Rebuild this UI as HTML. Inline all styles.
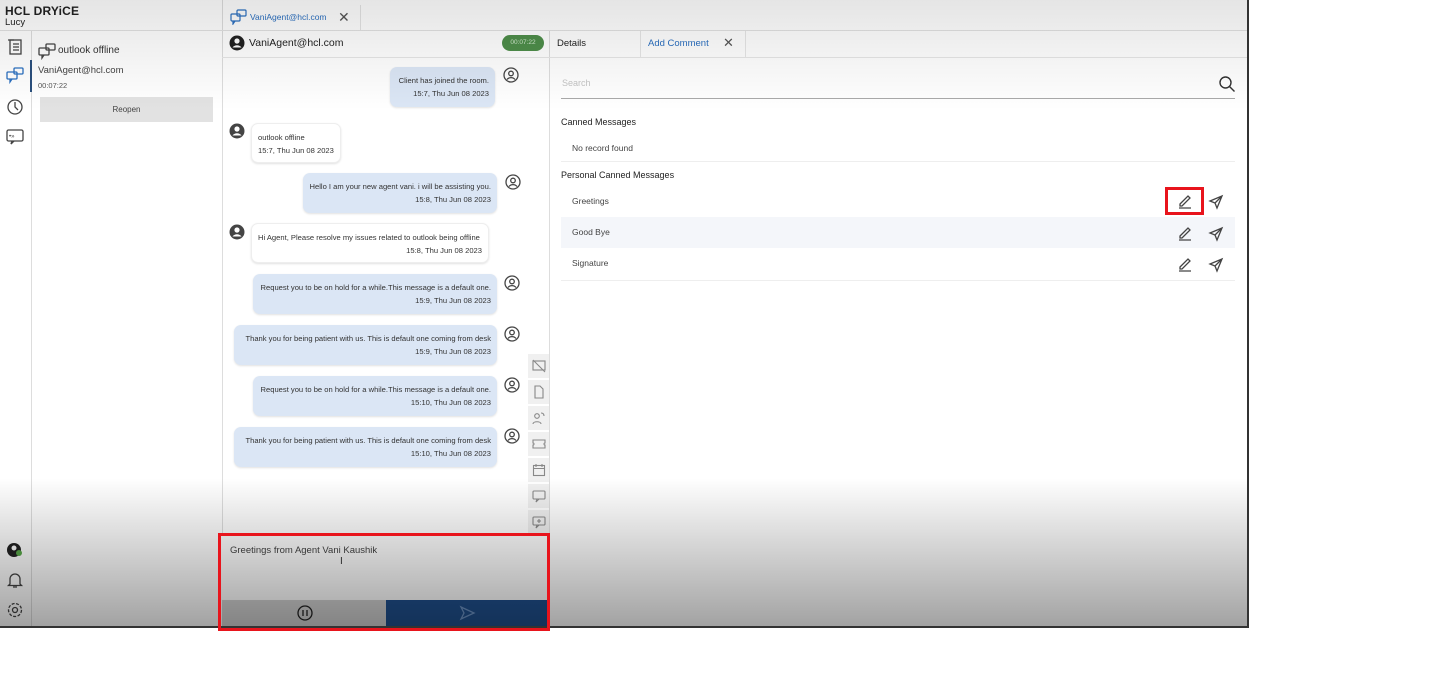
<!DOCTYPE html>
<html><head><meta charset="utf-8"><style>
*{margin:0;padding:0;box-sizing:border-box}
body{width:1431px;height:679px;background:#fff;font-family:"Liberation Sans",sans-serif;position:relative;overflow:hidden;color:#333}
.a{position:absolute}
.app{position:absolute;left:0;top:0;width:1249px;height:628px;background:#fff;border-right:2px solid #333;border-bottom:2px solid #333;overflow:hidden}
.vl{position:absolute;width:1px;background:#ddd}
.b{position:absolute;background:#dbe6f5;border-radius:7px;font-size:7.6px;color:#333;text-align:right;padding:7px 6px 0 6px;line-height:13px;box-shadow:0 1px 2px rgba(0,0,0,.12);white-space:nowrap}
.w{background:#fff;text-align:left;border:1px solid #eee}
.w .t{text-align:right}
.w.s .t{text-align:left}
svg{position:absolute}
.ic{stroke:#444;fill:none;stroke-width:1.3}
.tb{position:absolute;left:528px;width:21px;height:24px;background:#f0f0f0}
</style></head><body>
<div class="app">
<div class="vl" style="left:31px;top:30px;height:600px"></div>
<div class="vl" style="left:222px;top:0;height:600px"></div>
<div class="vl" style="left:549px;top:30px;height:510px"></div>
<div class="a" style="left:0;top:30px;width:1249px;height:1px;background:#e2e2e2"></div>
<div class="a" style="left:5px;top:4px;font-size:12px;font-weight:bold;color:#222;letter-spacing:.2px">HCL <span style="font-weight:900">DRYiCE</span></div>
<div class="a" style="left:5px;top:17px;font-size:9.5px;color:#222">Lucy</div>
<svg style="left:6px;top:38px" width="18" height="18" class="ic"><rect x="4" y="2" width="11" height="14"/><path d="M2 2h6M7 6h6M7 9h6M7 12h6"/></svg>
<svg style="left:5px;top:66px" width="20" height="18"><g fill="none" stroke="#2a6fc0" stroke-width="1.3"><rect x="2" y="6" width="10" height="7" rx="1"/><path d="M5 13v3l2-3"/><rect x="9" y="2" width="9" height="6" rx="1"/></g></svg>
<svg style="left:6px;top:98px" width="18" height="18" class="ic"><circle cx="9" cy="9" r="7"/><path d="M9 4v5l3 3"/></svg>
<svg style="left:5px;top:128px" width="20" height="18" class="ic"><rect x="2" y="2" width="16" height="11" rx="1.5"/><path d="M7 13l-1 3 3-3"/><text x="4" y="10" font-size="6" fill="#444" stroke="none">•»</text></svg>
<div class="a" style="left:30px;top:60px;width:2px;height:32px;background:#2a4f7d"></div>
<svg style="left:6px;top:542px" width="18" height="16"><circle cx="8" cy="8" r="7" fill="#222"/><circle cx="8" cy="6" r="2.5" fill="#fff"/><circle cx="13" cy="11" r="3" fill="#5aaa4a"/></svg>
<svg style="left:6px;top:571px" width="18" height="18" class="ic"><path d="M4 13V8a5 5 0 0 1 10 0v5l1.5 1.5h-13zM7 16h4"/></svg>
<svg style="left:6px;top:601px" width="18" height="18" class="ic"><circle cx="9" cy="9" r="2.5"/><circle cx="9" cy="9" r="6.5" stroke-dasharray="3 1.5"/></svg>
<svg style="left:38px;top:42px" width="18" height="18" class="ic"><rect x="1" y="6" width="10" height="7" rx="1"/><path d="M4 13v3l2-3"/><rect x="8" y="2" width="9" height="6" rx="1"/></svg>
<div class="a" style="left:58px;top:45px;font-size:10px;color:#333">outlook offline</div>
<div class="a" style="left:38px;top:65px;font-size:9.5px;color:#444">VaniAgent@hcl.com</div>
<div class="a" style="left:38px;top:81px;font-size:7.5px;color:#555">00:07:22</div>
<div class="a" style="left:40px;top:97px;width:173px;height:25px;background:#e2e2e2;font-size:8px;text-align:center;line-height:25px;color:#444">Reopen</div>
<svg style="left:230px;top:9px" width="18" height="16"><g fill="none" stroke="#2a6fc0" stroke-width="1.2"><rect x="1" y="5" width="9" height="7" rx="1"/><path d="M3 12v3l2-3"/><rect x="7" y="1" width="9" height="6" rx="1"/></g></svg>
<div class="a" style="left:250px;top:12px;font-size:8.5px;color:#2a6fc0">VaniAgent@hcl.com</div>
<div class="a" style="left:338px;top:9px;font-size:14px;color:#555">✕</div>
<div class="vl" style="left:360px;top:5px;height:25px;background:#e4e4e4"></div>
<svg style="left:229px;top:35px" width="16" height="16"><circle cx="8" cy="8" r="7.5" fill="#222"/><circle cx="8" cy="6" r="2.6" fill="#fff"/><path d="M3.5 12.5c2-3 7-3 9 0" fill="#fff"/></svg>
<div class="a" style="left:249px;top:37px;font-size:10.5px;color:#222">VaniAgent@hcl.com</div>
<div class="a" style="left:502px;top:35px;width:42px;height:16px;background:#4e8e4a;border-radius:8px;font-size:6.5px;color:#cfe8cc;text-align:center;line-height:16px">00:07:22</div>
<div class="a" style="left:222px;top:57px;width:327px;height:1px;background:#e6e6e6"></div>
<div class="b" style="left:390px;top:67px;width:105px;height:40px">Client has joined the room.<br>15:7, Thu Jun 08 2023</div>
<div class="b w s" style="left:251px;top:123px;width:90px;height:40px">outlook offline<br>15:7, Thu Jun 08 2023</div>
<div class="b" style="left:303px;top:173px;width:194px;height:40px">Hello I am your new agent vani. i will be assisting you.<br>15:8, Thu Jun 08 2023</div>
<div class="b w" style="left:251px;top:223px;width:238px;height:40px"><div>Hi Agent, Please resolve my issues related to outlook being offline</div><div class="t">15:8, Thu Jun 08 2023</div></div>
<div class="b" style="left:253px;top:274px;width:244px;height:40px">Request you to be on hold for a while.This message is a default one.<br>15:9, Thu Jun 08 2023</div>
<div class="b" style="left:234px;top:325px;width:263px;height:40px">Thank you for being patient with us. This is default one coming from desk<br>15:9, Thu Jun 08 2023</div>
<div class="b" style="left:253px;top:376px;width:244px;height:40px">Request you to be on hold for a while.This message is a default one.<br>15:10, Thu Jun 08 2023</div>
<div class="b" style="left:234px;top:427px;width:263px;height:40px">Thank you for being patient with us. This is default one coming from desk<br>15:10, Thu Jun 08 2023</div>
<svg style="left:229px;top:123px" width="16" height="16"><circle cx="8" cy="8" r="7.5" fill="#444"/><circle cx="8" cy="6" r="2.6" fill="#fff"/><path d="M3.5 12.5c2-3 7-3 9 0" fill="#fff"/></svg>
<svg style="left:229px;top:224px" width="16" height="16"><circle cx="8" cy="8" r="7.5" fill="#444"/><circle cx="8" cy="6" r="2.6" fill="#fff"/><path d="M3.5 12.5c2-3 7-3 9 0" fill="#fff"/></svg>
<svg style="left:503px;top:67px" width="16" height="16" class="ic"><circle cx="8" cy="8" r="7"/><circle cx="8" cy="6.5" r="2.3"/><path d="M4 12.5c2-2.5 6-2.5 8 0"/></svg>
<svg style="left:505px;top:174px" width="16" height="16" class="ic"><circle cx="8" cy="8" r="7"/><circle cx="8" cy="6.5" r="2.3"/><path d="M4 12.5c2-2.5 6-2.5 8 0"/></svg>
<svg style="left:504px;top:275px" width="16" height="16" class="ic"><circle cx="8" cy="8" r="7"/><circle cx="8" cy="6.5" r="2.3"/><path d="M4 12.5c2-2.5 6-2.5 8 0"/></svg>
<svg style="left:504px;top:326px" width="16" height="16" class="ic"><circle cx="8" cy="8" r="7"/><circle cx="8" cy="6.5" r="2.3"/><path d="M4 12.5c2-2.5 6-2.5 8 0"/></svg>
<svg style="left:504px;top:377px" width="16" height="16" class="ic"><circle cx="8" cy="8" r="7"/><circle cx="8" cy="6.5" r="2.3"/><path d="M4 12.5c2-2.5 6-2.5 8 0"/></svg>
<svg style="left:504px;top:428px" width="16" height="16" class="ic"><circle cx="8" cy="8" r="7"/><circle cx="8" cy="6.5" r="2.3"/><path d="M4 12.5c2-2.5 6-2.5 8 0"/></svg>
<div class="tb" style="top:354px"></div><div class="tb" style="top:380px"></div><div class="tb" style="top:406px"></div><div class="tb" style="top:432px"></div><div class="tb" style="top:458px"></div><div class="tb" style="top:484px"></div><div class="tb" style="top:510px"></div>
<svg style="left:532px;top:359px" width="14" height="14"><g fill="none" stroke="#888" stroke-width="1.1"><rect x="1" y="2" width="12" height="9"/><path d="M1 1l12 12"/></g></svg>
<svg style="left:532px;top:385px" width="14" height="14"><g fill="none" stroke="#888" stroke-width="1.1"><path d="M3 1h5l3 3v9H3z"/></g></svg>
<svg style="left:532px;top:411px" width="14" height="14"><g fill="none" stroke="#888" stroke-width="1.1"><circle cx="5" cy="5" r="2.3"/><path d="M1 13c0-3 8-3 8 0M9 2c2 0 3 1 3 3"/></g></svg>
<svg style="left:532px;top:437px" width="14" height="14"><g fill="none" stroke="#888" stroke-width="1.1"><path d="M1 3h12v3a1 1 0 0 0 0 2v3H1V8a1 1 0 0 0 0-2z"/></g></svg>
<svg style="left:532px;top:463px" width="14" height="14"><g fill="none" stroke="#888" stroke-width="1.1"><rect x="1.5" y="2.5" width="11" height="10"/><path d="M1.5 5.5h11M4 1v3M10 1v3"/></g></svg>
<svg style="left:532px;top:489px" width="14" height="14"><g fill="none" stroke="#888" stroke-width="1.1"><rect x="1" y="2" width="12" height="8" rx="1"/><path d="M5 10l-1 3 3-3"/></g></svg>
<svg style="left:532px;top:515px" width="14" height="14"><g fill="none" stroke="#888" stroke-width="1.1"><rect x="1" y="2" width="12" height="8" rx="1"/><path d="M5 10l-1 3 3-3M7 4v4M5 6h4"/></g></svg>
<div class="a" style="left:222px;top:536px;width:327px;height:64px;background:#fff"></div>
<div class="a" style="left:230px;top:545px;font-size:9.5px;color:#444">Greetings from Agent Vani Kaushik</div>
<div class="a" style="left:340px;top:556px;font-size:10px;color:#333">I</div>
<div class="a" style="left:222px;top:600px;width:164px;height:27px;background:#d0d0d0"></div>
<svg style="left:296px;top:604px" width="18" height="18" class="ic"><g stroke="#222"><circle cx="9" cy="9" r="7"/><path d="M7 6v6M11 6v6"/></g></svg>
<div class="a" style="left:386px;top:600px;width:162px;height:27px;background:#1f4f8c"></div>
<svg style="left:459px;top:605px" width="18" height="16"><path d="M2 2l13 6-13 6 3-6z" fill="none" stroke="#6d93c4" stroke-width="1.3"/></svg>
<div class="a" style="left:557px;top:38px;font-size:9.5px;color:#222">Details</div>
<div class="vl" style="left:640px;top:31px;height:26px;background:#e6e6e6"></div>
<div class="a" style="left:648px;top:38px;font-size:9.5px;color:#2a6fc0">Add Comment</div>
<div class="a" style="left:723px;top:35px;font-size:13px;color:#555">✕</div>
<div class="vl" style="left:745px;top:31px;height:26px;background:#e6e6e6"></div>
<div class="a" style="left:549px;top:57px;width:698px;height:1px;background:#e6e6e6"></div>
<div class="a" style="left:562px;top:78px;font-size:9px;color:#c4c4c4">Search</div>
<svg style="left:1218px;top:75px" width="18" height="18" class="ic"><g stroke="#333" stroke-width="1.4"><circle cx="7.5" cy="7.5" r="5.5"/><path d="M11.5 11.5l5 5"/></g></svg>
<div class="a" style="left:561px;top:98px;width:674px;height:1px;background:#aaa"></div>
<div class="a" style="left:561px;top:117px;font-size:9px;color:#222">Canned Messages</div>
<div class="a" style="left:572px;top:143px;font-size:8.5px;color:#444">No record found</div>
<div class="a" style="left:561px;top:161px;width:674px;height:1px;background:#eee"></div>
<div class="a" style="left:561px;top:170px;font-size:9px;color:#222">Personal Canned Messages</div>
<div class="a" style="left:561px;top:217px;width:674px;height:31px;background:#f4f6fa"></div>
<div class="a" style="left:561px;top:280px;width:674px;height:1px;background:#eee"></div>
<div class="a" style="left:572px;top:196px;font-size:8.5px;color:#444">Greetings</div>
<div class="a" style="left:572px;top:227px;font-size:8.5px;color:#444">Good Bye</div>
<div class="a" style="left:572px;top:258px;font-size:8.5px;color:#444">Signature</div>
<svg style="left:1177px;top:193px" width="16" height="16" class="ic"><path d="M3 11l8-8 2 2-8 8H3zM2 15h12"/></svg>
<svg style="left:1177px;top:225px" width="16" height="16" class="ic"><path d="M3 11l8-8 2 2-8 8H3zM2 15h12"/></svg>
<svg style="left:1177px;top:256px" width="16" height="16" class="ic"><path d="M3 11l8-8 2 2-8 8H3zM2 15h12"/></svg>
<svg style="left:1208px;top:194px" width="16" height="16" class="ic"><path d="M14 2L2 7l5 2 2 5zM7 9l7-7"/></svg>
<svg style="left:1208px;top:226px" width="16" height="16" class="ic"><path d="M14 2L2 7l5 2 2 5zM7 9l7-7"/></svg>
<svg style="left:1208px;top:257px" width="16" height="16" class="ic"><path d="M14 2L2 7l5 2 2 5zM7 9l7-7"/></svg>
<div class="a" style="left:0;top:0;width:1249px;height:110px;background:linear-gradient(rgba(0,0,0,.1),rgba(0,0,0,0))"></div>
<div class="a" style="left:0;top:478px;width:1249px;height:150px;background:linear-gradient(rgba(0,0,0,0),rgba(0,0,0,.37))"></div>
</div>
<div class="a" style="left:218px;top:533px;width:332px;height:98px;border:3px solid #e8141c"></div>
<div class="a" style="left:1165px;top:187px;width:39px;height:28px;border:3px solid #e8141c"></div>
</body></html>
